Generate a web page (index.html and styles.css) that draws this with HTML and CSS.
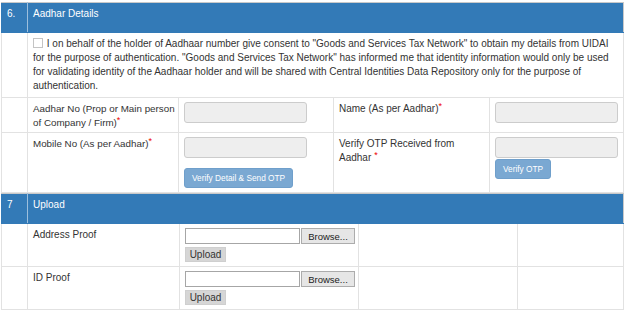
FILE: index.html
```html
<!DOCTYPE html>
<html lang="en">
<head>
    <meta charset="UTF-8">
    <title>Aadhar Details</title>
    <link rel="stylesheet" href="styles.css">
</head>
<body>
    <div class="panel">
        <table class="grid grid-aadhar">
            <colgroup>
                <col class="c-no">
                <col class="c-label">
                <col class="c-field">
                <col class="c-label2">
                <col class="c-field2">
            </colgroup>
            <tr class="sec-head">
                <td>6.</td>
                <td colspan="4">Aadhar Details</td>
            </tr>
            <tr>
                <td></td>
                <td colspan="4" class="consent">
                    <input type="checkbox" class="check"> I on behalf of the holder of Aadhaar number give consent to "Goods and Services Tax Network" to obtain my details from UIDAI for the purpose of authentication. "Goods and Services Tax Network" has informed me that identity information would only be used for validating identity of the Aadhaar holder and will be shared with Central Identities Data Repository only for the purpose of authentication.
                </td>
            </tr>
            <tr class="row-aadhar">
                <td></td>
                <td class="label-cell required">Aadhar No (Prop or Main person of Company / Firm)</td>
                <td class="field-cell"><input type="text" class="field"></td>
                <td class="required">Name (As per Aadhar)</td>
                <td class="field-cell"><input type="text" class="field"></td>
            </tr>
            <tr>
                <td></td>
                <td class="label-cell required">Mobile No (As per Aadhar)</td>
                <td class="field-cell">
                    <input type="text" class="field">
                    <button type="button" class="btn-verify btn-send">Verify Detail &amp; Send OTP</button>
                </td>
                <td class="required spaced">Verify OTP Received from Aadhar</td>
                <td class="field-cell">
                    <input type="text" class="field">
                    <button type="button" class="btn-verify btn-otp">Verify OTP</button>
                </td>
            </tr>
        </table>

        <table class="grid grid-upload">
            <colgroup>
                <col class="c-no">
                <col class="u-label">
                <col class="u-file">
                <col class="u-empty">
                <col class="u-empty2">
            </colgroup>
            <tr class="sec-head">
                <td>7</td>
                <td colspan="4">Upload</td>
            </tr>
            <tr>
                <td></td>
                <td>Address Proof</td>
                <td class="upload-cell">
                    <div class="file-pick">
                        <input type="text" class="file-text">
                        <button type="button" class="browse">Browse...</button>
                    </div>
                    <button type="button" class="btn-upload">Upload</button>
                </td>
                <td></td>
                <td></td>
            </tr>
            <tr>
                <td></td>
                <td>ID Proof</td>
                <td class="upload-cell">
                    <div class="file-pick">
                        <input type="text" class="file-text">
                        <button type="button" class="browse">Browse...</button>
                    </div>
                    <button type="button" class="btn-upload">Upload</button>
                </td>
                <td></td>
                <td></td>
            </tr>
        </table>
    </div>
</body>
</html>
```

FILE: styles.css
```css
:root {
    --primary-color: #337ab7;
    --text-color: #333;
    --line-color: #e2e2e2;
    --field-bg: #eee;
    --field-border: #ccc;
    --button-light: #7aa8d2;
}

body {
    font-family: 'Liberation Sans', Arial, sans-serif;
    font-size: 10px;
    color: var(--text-color);
    background-color: white;
    margin: 0;
    padding: 0;
}

.panel {
    padding: 2px 2px 0 1px;
}

.grid {
    width: 622px;
    border-collapse: collapse;
    table-layout: fixed;
}

.grid td {
    border: 1px solid var(--line-color);
    padding: 4px 3px 4px 5px;
    vertical-align: top;
    line-height: 14px;
}

.c-no { width: 26px; }
.c-label { width: 151px; }
.c-field { width: 155px; }
.c-label2 { width: 156px; }
.c-field2 { width: 134px; }

.u-label { width: 152px; }
.u-file { width: 179px; }
.u-empty { width: 159px; }
.u-empty2 { width: 106px; }

.sec-head td {
    height: 21px;
    background-color: var(--primary-color);
    color: white;
    border-top-color: #c9c9c9;
    border-bottom-color: var(--primary-color);
    padding-top: 4px;
}

.sec-head td:first-child {
    border-left-color: var(--primary-color);
    border-right-color: #9dbfdd;
}

.sec-head td:last-child {
    border-right-color: #c9c9c9;
}

.consent {
    line-height: 14.25px;
}

.label-cell {
    padding-right: 0;
    font-size: 9.8px;
}

.row-aadhar td {
    padding-top: 4px;
    padding-bottom: 2px;
}

.check {
    -webkit-appearance: none;
    appearance: none;
    width: 10px;
    height: 10px;
    margin: 0 1px 0 0;
    border: 1px solid #c4c4c4;
    background-color: white;
    vertical-align: -1px;
}

.required::after {
    content: "*";
    color: #e00;
    font-size: 9px;
    line-height: 1;
    vertical-align: top;
}

.required.spaced::after {
    margin-left: 3px;
}

.field-cell {
    padding-left: 3px;
}

.field {
    display: block;
    width: 123px;
    height: 21px;
    box-sizing: border-box;
    margin: 0;
    background-color: var(--field-bg);
    border: 1px solid var(--field-border);
    border-radius: 3px;
}

.btn-verify {
    display: block;
    height: 20px;
    padding: 0 7px;
    background-color: var(--button-light);
    border: 1px solid #6f9fcb;
    border-radius: 3px;
    color: white;
    font-family: inherit;
    font-size: 8.3px;
}

.btn-send {
    margin-top: 10px;
}

.btn-otp {
    margin-top: 1px;
}

.upload-cell {
    padding: 4px 3px 4px 4px;
}

.file-pick {
    display: flex;
}

.file-text {
    width: 115px;
    height: 16px;
    box-sizing: border-box;
    margin: 0;
    border: 1px solid #a6a6a6;
    background-color: white;
}

.browse {
    width: 55px;
    height: 16px;
    margin: 0 0 0 1px;
    padding: 0;
    background-color: #e6e6e6;
    border: 1px solid #acacac;
    color: #222;
    font-family: inherit;
    font-size: 9.5px;
}

.btn-upload {
    display: block;
    width: 41px;
    height: 15px;
    margin-top: 3px;
    padding: 0;
    background-color: #d6d6d6;
    border: 1px solid #cfcfcf;
    color: #333;
    font-family: inherit;
    font-size: 10px;
}

.grid-upload {
    border-bottom: 1px solid #8eaccb;
}
```
